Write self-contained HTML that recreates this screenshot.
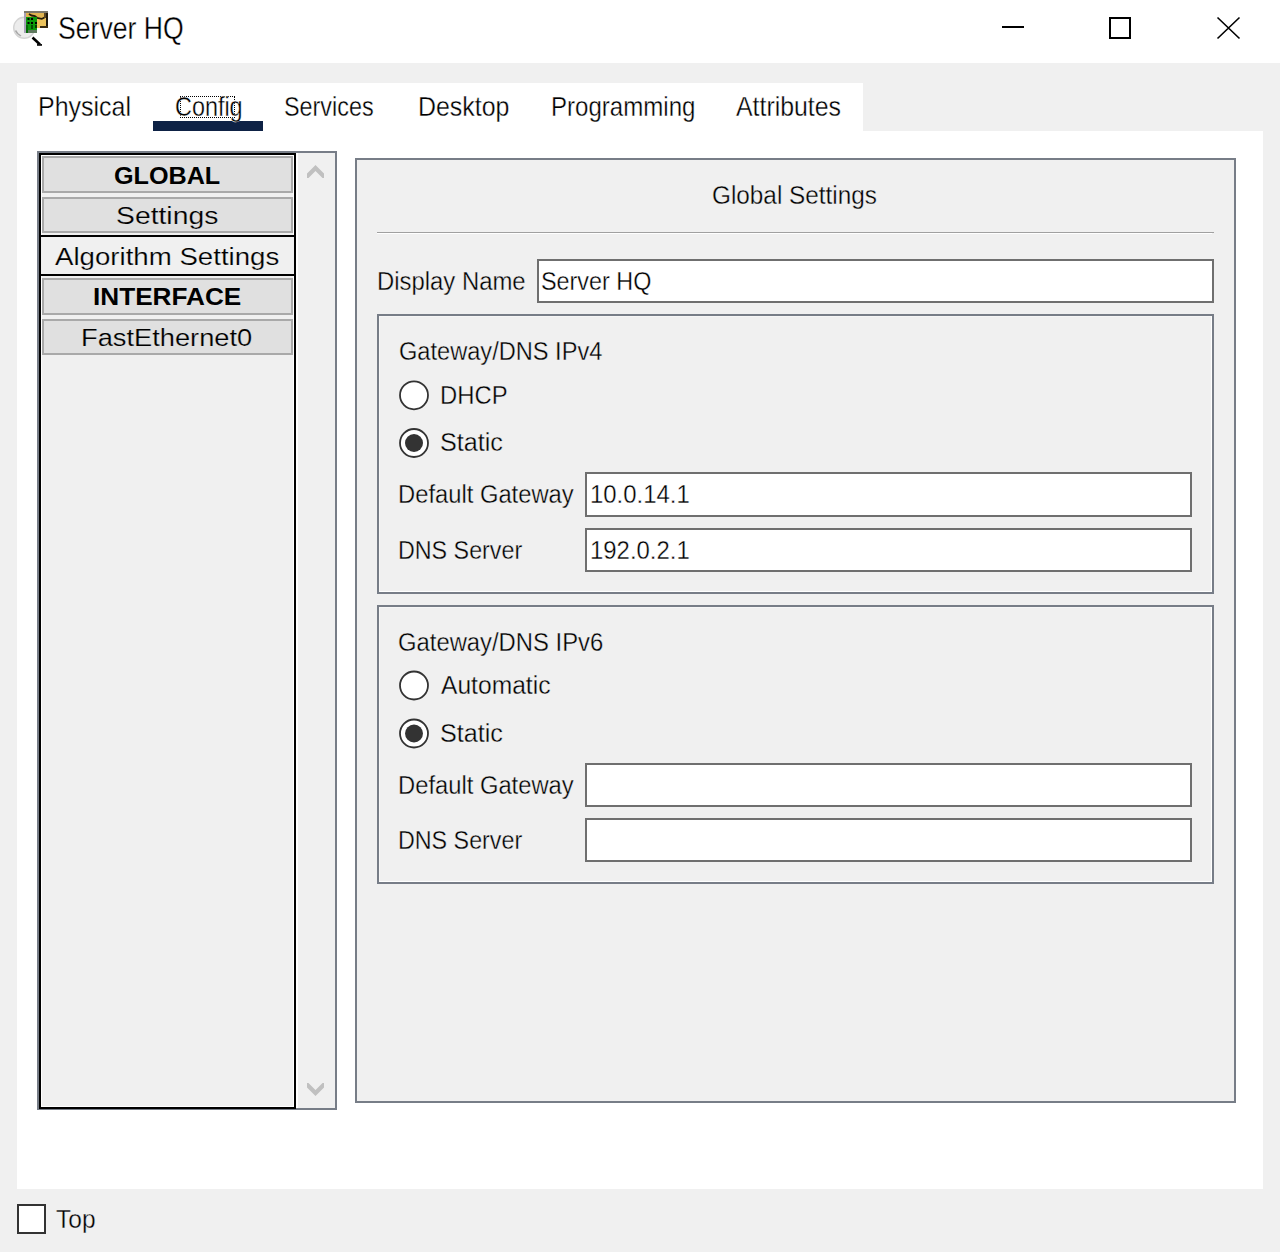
<!DOCTYPE html>
<html><head><meta charset="utf-8"><title>Server HQ</title>
<style>
html,body{margin:0;padding:0;}
body{width:1280px;height:1252px;overflow:hidden;background:#f0f0f0;position:relative;font-family:"Liberation Sans",sans-serif;color:#000;}
.a{position:absolute;box-sizing:border-box;}
.tx{position:absolute;line-height:1;white-space:pre;transform-origin:0 0;color:#000;-webkit-text-stroke:var(--sw,0.35px) var(--bg,#f0f0f0);}
.btn{position:absolute;box-sizing:border-box;left:42px;width:251px;border:2px solid #a9a9a9;background:#e0e0e0;}
.grp{position:absolute;box-sizing:border-box;border:2px solid #777d87;}
.grp:after{content:"";position:absolute;left:0;top:0;right:0;bottom:0;border-right:1px solid #fff;border-bottom:1px solid #fff;border-left:1px solid #f6f6f6;border-top:1px solid #f6f6f6;}
.inp{position:absolute;box-sizing:border-box;border:2px solid #6f6f6f;background:#fff;}
</style></head><body>
<div class="a" style="left:0;top:0;width:1280px;height:63px;background:#fff"></div>
<svg class="a" style="left:8px;top:6px" width="48" height="44" viewBox="8 6 48 44">
  <circle cx="24.2" cy="27.8" r="10.5" fill="#ececec" stroke="#d4d4d4" stroke-width="1.4"/>
  <path d="M15.5 30.5 L17.5 33.5 L21 36" stroke="#a8a8a8" stroke-width="1.5" fill="none"/>
  <path d="M32.5 37.5 L40 44.5" stroke="#000" stroke-width="2.6" fill="none"/><rect x="37" y="44" width="5" height="1.8" fill="#111"/>
  <rect x="24" y="11" width="24" height="17" fill="#ecc35c"/>
  <rect x="24" y="11" width="24" height="2" fill="#7c786a"/>
  <rect x="26" y="13" width="18" height="4" fill="#e0b450"/>
  <path d="M29 14 L31.5 15.5 L35 16.2 L37 17.8 L42 18.8 L44.5 17.5" stroke="#231a08" stroke-width="1.8" fill="none" stroke-linejoin="bevel"/>
  <rect x="44" y="13" width="2" height="5" fill="#5a4520"/>
  <rect x="46" y="13" width="2" height="14" fill="#1e180c"/>
  <rect x="40" y="26" width="8" height="2" fill="#3a2c12"/>
  <rect x="26" y="17" width="11" height="16" fill="#0a9a0a"/>
  <rect x="27.5" y="18" width="2" height="2" fill="#000"/><rect x="31" y="18" width="2" height="2" fill="#000"/>
  <rect x="27.5" y="22" width="2" height="2" fill="#000"/><rect x="31" y="22" width="2" height="2" fill="#000"/><rect x="35" y="22" width="2" height="2" fill="#000"/>
  <rect x="26" y="25" width="2" height="8" fill="#056a05"/><rect x="31" y="25" width="2" height="4" fill="#044a04"/><rect x="35" y="25" width="2" height="3" fill="#033a03"/>
  <rect x="28" y="30" width="9" height="3" fill="#5f7a5f"/>
  <rect x="24" y="13" width="2" height="20" fill="#a8a0b8"/>
</svg>
<div class="a" style="left:1002px;top:26px;width:22px;height:2px;background:#000"></div>
<div class="a" style="left:1109px;top:17px;width:22px;height:22px;border:2px solid #000"></div>
<svg class="a" style="left:1210px;top:10px" width="40" height="36" viewBox="1210 10 40 36">
  <path d="M1217.5 17.5 L1239.5 38.5 M1239.5 17.5 L1217.5 38.5" stroke="#000" stroke-width="1.6"/>
</svg>

<div class="a" style="left:17px;top:83px;width:846px;height:48px;background:#fff"></div>
<div class="a" style="left:17px;top:131px;width:1246px;height:1058px;background:#fff"></div>
<div class="a" style="left:153px;top:121px;width:110px;height:10px;background:#0e2245"></div>
<div class="a" style="left:180px;top:96px;width:55px;height:22px;border:1px dotted #000"></div>

<div class="a" style="left:37px;top:151px;width:300px;height:959px;border:2px solid #777d87;background:#f0f0f0"></div>
<div class="a" style="left:296px;top:153px;width:2px;height:955px;background:#fff"></div>
<div class="a" style="left:39px;top:153px;width:257px;height:956px;border:2px solid #000;background:#f0f0f0"></div>
<div class="a" style="left:41px;top:155px;width:253px;height:952px;border:1px solid #fff"></div>
<svg class="a" style="left:300px;top:160px" width="32" height="24" viewBox="300 160 32 24">
  <polygon points="307,178 307,173.5 315.5,165 324,173.5 324,178 322.5,178 315.5,171 308.5,178" fill="#c0c0c0"/>
</svg>
<svg class="a" style="left:300px;top:1078px" width="32" height="24" viewBox="300 1078 32 24">
  <polygon points="307,1083 307,1087.5 315.5,1096 324,1087.5 324,1083 322.5,1083 315.5,1090 308.5,1083" fill="#c0c0c0"/>
</svg>
<div class="btn" style="top:156px;height:37px"></div>
<div class="btn" style="top:197px;height:36px"></div>
<div class="a" style="left:39px;top:235px;width:257px;height:41px;border:2px solid #000;background:#f0f0f0"></div>
<div class="btn" style="top:278px;height:37px"></div>
<div class="btn" style="top:319px;height:36px"></div>

<div class="a" style="left:355px;top:158px;width:881px;height:945px;background:#f0f0f0;border:2px solid #777d87"></div>
<div class="a" style="left:377px;top:232px;width:837px;height:1px;background:#a0a0a0"></div>
<div class="a" style="left:377px;top:233px;width:835px;height:1px;background:#fff"></div>
<div class="inp" style="left:537px;top:259px;width:677px;height:44px"></div>

<div class="grp" style="left:377px;top:314px;width:837px;height:280px"></div>
<div class="inp" style="left:585px;top:472px;width:607px;height:45px"></div>
<div class="inp" style="left:585px;top:528px;width:607px;height:44px"></div>

<div class="grp" style="left:377px;top:605px;width:837px;height:279px"></div>
<div class="inp" style="left:585px;top:763px;width:607px;height:44px"></div>
<div class="inp" style="left:585px;top:818px;width:607px;height:44px"></div>

<svg class="a" style="left:390px;top:370px" width="50" height="100" viewBox="390 370 50 100">
  <circle cx="414" cy="395.3" r="14" fill="#fff" stroke="#333" stroke-width="1.8"/>
  <circle cx="414" cy="443" r="14" fill="#fff" stroke="#333" stroke-width="1.8"/>
  <circle cx="414" cy="443" r="9" fill="#333"/>
</svg>
<svg class="a" style="left:390px;top:660px" width="50" height="100" viewBox="390 660 50 100">
  <circle cx="414" cy="685.5" r="14" fill="#fff" stroke="#333" stroke-width="1.8"/>
  <circle cx="414" cy="733.5" r="14" fill="#fff" stroke="#333" stroke-width="1.8"/>
  <circle cx="414" cy="733.5" r="9" fill="#333"/>
</svg>

<div class="a" style="left:17px;top:1204px;width:29px;height:30px;border:2px solid #333;background:#fff"></div>
<div class="tx" style="--bg:#fff;--sw:0.35px;left:57.67px;top:13.13px;font-size:30.43px;font-weight:normal;transform:scaleX(0.8748)">Server HQ</div>
<div class="tx" style="--bg:#fff;--sw:0.35px;left:38.00px;top:92.59px;font-size:27.54px;font-weight:normal;transform:scaleX(0.9079)">Physical</div>
<div class="tx" style="--bg:#fff;--sw:0.35px;left:174.83px;top:92.59px;font-size:27.54px;font-weight:normal;transform:scaleX(0.8493)">Config</div>
<div class="tx" style="--bg:#fff;--sw:0.35px;left:283.83px;top:92.59px;font-size:27.54px;font-weight:normal;transform:scaleX(0.8483)">Services</div>
<div class="tx" style="--bg:#fff;--sw:0.35px;left:417.51px;top:92.59px;font-size:27.54px;font-weight:normal;transform:scaleX(0.9053)">Desktop</div>
<div class="tx" style="--bg:#fff;--sw:0.35px;left:550.57px;top:92.59px;font-size:27.54px;font-weight:normal;transform:scaleX(0.8739)">Programming</div>
<div class="tx" style="--bg:#fff;--sw:0.35px;left:736.00px;top:92.59px;font-size:27.54px;font-weight:normal;transform:scaleX(0.9033)">Attributes</div>
<div class="tx" style="--bg:#e0e0e0;--sw:0px;left:113.79px;top:164.06px;font-size:24.64px;font-weight:bold;transform:scaleX(1.0220)">GLOBAL</div>
<div class="tx" style="--bg:#e0e0e0;--sw:0.2px;left:116.08px;top:204.06px;font-size:24.64px;font-weight:normal;transform:scaleX(1.1499)">Settings</div>
<div class="tx" style="--bg:#f0f0f0;--sw:0.2px;left:54.70px;top:245.06px;font-size:24.64px;font-weight:normal;transform:scaleX(1.1223)">Algorithm Settings</div>
<div class="tx" style="--bg:#e0e0e0;--sw:0px;left:92.97px;top:285.06px;font-size:24.64px;font-weight:bold;transform:scaleX(1.0622)">INTERFACE</div>
<div class="tx" style="--bg:#e0e0e0;--sw:0.2px;left:80.82px;top:326.06px;font-size:24.64px;font-weight:normal;transform:scaleX(1.1070)">FastEthernet0</div>
<div class="tx" style="--bg:#f0f0f0;--sw:0.35px;left:711.78px;top:181.83px;font-size:26.09px;font-weight:normal;transform:scaleX(0.9326)">Global Settings</div>
<div class="tx" style="--bg:#f0f0f0;--sw:0.35px;left:377.09px;top:267.83px;font-size:26.09px;font-weight:normal;transform:scaleX(0.9156)">Display Name</div>
<div class="tx" style="--bg:#fff;--sw:0.35px;left:540.83px;top:267.83px;font-size:26.09px;font-weight:normal;transform:scaleX(0.8962)">Server HQ</div>
<div class="tx" style="--bg:#f0f0f0;--sw:0.35px;left:399.12px;top:337.83px;font-size:26.09px;font-weight:normal;transform:scaleX(0.9051)">Gateway/DNS IPv4</div>
<div class="tx" style="--bg:#f0f0f0;--sw:0.35px;left:440.39px;top:381.83px;font-size:26.09px;font-weight:normal;transform:scaleX(0.9143)">DHCP</div>
<div class="tx" style="--bg:#f0f0f0;--sw:0.35px;left:439.64px;top:428.83px;font-size:26.09px;font-weight:normal;transform:scaleX(0.9647)">Static</div>
<div class="tx" style="--bg:#f0f0f0;--sw:0.35px;left:397.90px;top:480.83px;font-size:26.09px;font-weight:normal;transform:scaleX(0.9114)">Default Gateway</div>
<div class="tx" style="--bg:#fff;--sw:0.35px;left:590.49px;top:480.83px;font-size:26.09px;font-weight:normal;transform:scaleX(0.9166)">10.0.14.1</div>
<div class="tx" style="--bg:#f0f0f0;--sw:0.35px;left:398.14px;top:536.83px;font-size:26.09px;font-weight:normal;transform:scaleX(0.8925)">DNS Server</div>
<div class="tx" style="--bg:#fff;--sw:0.35px;left:590.09px;top:536.83px;font-size:26.09px;font-weight:normal;transform:scaleX(0.9166)">192.0.2.1</div>
<div class="tx" style="--bg:#f0f0f0;--sw:0.35px;left:398.31px;top:628.83px;font-size:26.09px;font-weight:normal;transform:scaleX(0.9134)">Gateway/DNS IPv6</div>
<div class="tx" style="--bg:#f0f0f0;--sw:0.35px;left:440.60px;top:671.83px;font-size:26.09px;font-weight:normal;transform:scaleX(0.9438)">Automatic</div>
<div class="tx" style="--bg:#f0f0f0;--sw:0.35px;left:439.64px;top:719.83px;font-size:26.09px;font-weight:normal;transform:scaleX(0.9647)">Static</div>
<div class="tx" style="--bg:#f0f0f0;--sw:0.35px;left:397.90px;top:771.83px;font-size:26.09px;font-weight:normal;transform:scaleX(0.9114)">Default Gateway</div>
<div class="tx" style="--bg:#f0f0f0;--sw:0.35px;left:398.14px;top:826.83px;font-size:26.09px;font-weight:normal;transform:scaleX(0.8925)">DNS Server</div>
<div class="tx" style="--bg:#f0f0f0;--sw:0.35px;left:55.51px;top:1205.83px;font-size:26.09px;font-weight:normal;transform:scaleX(0.9405)">Top</div>
</body></html>
